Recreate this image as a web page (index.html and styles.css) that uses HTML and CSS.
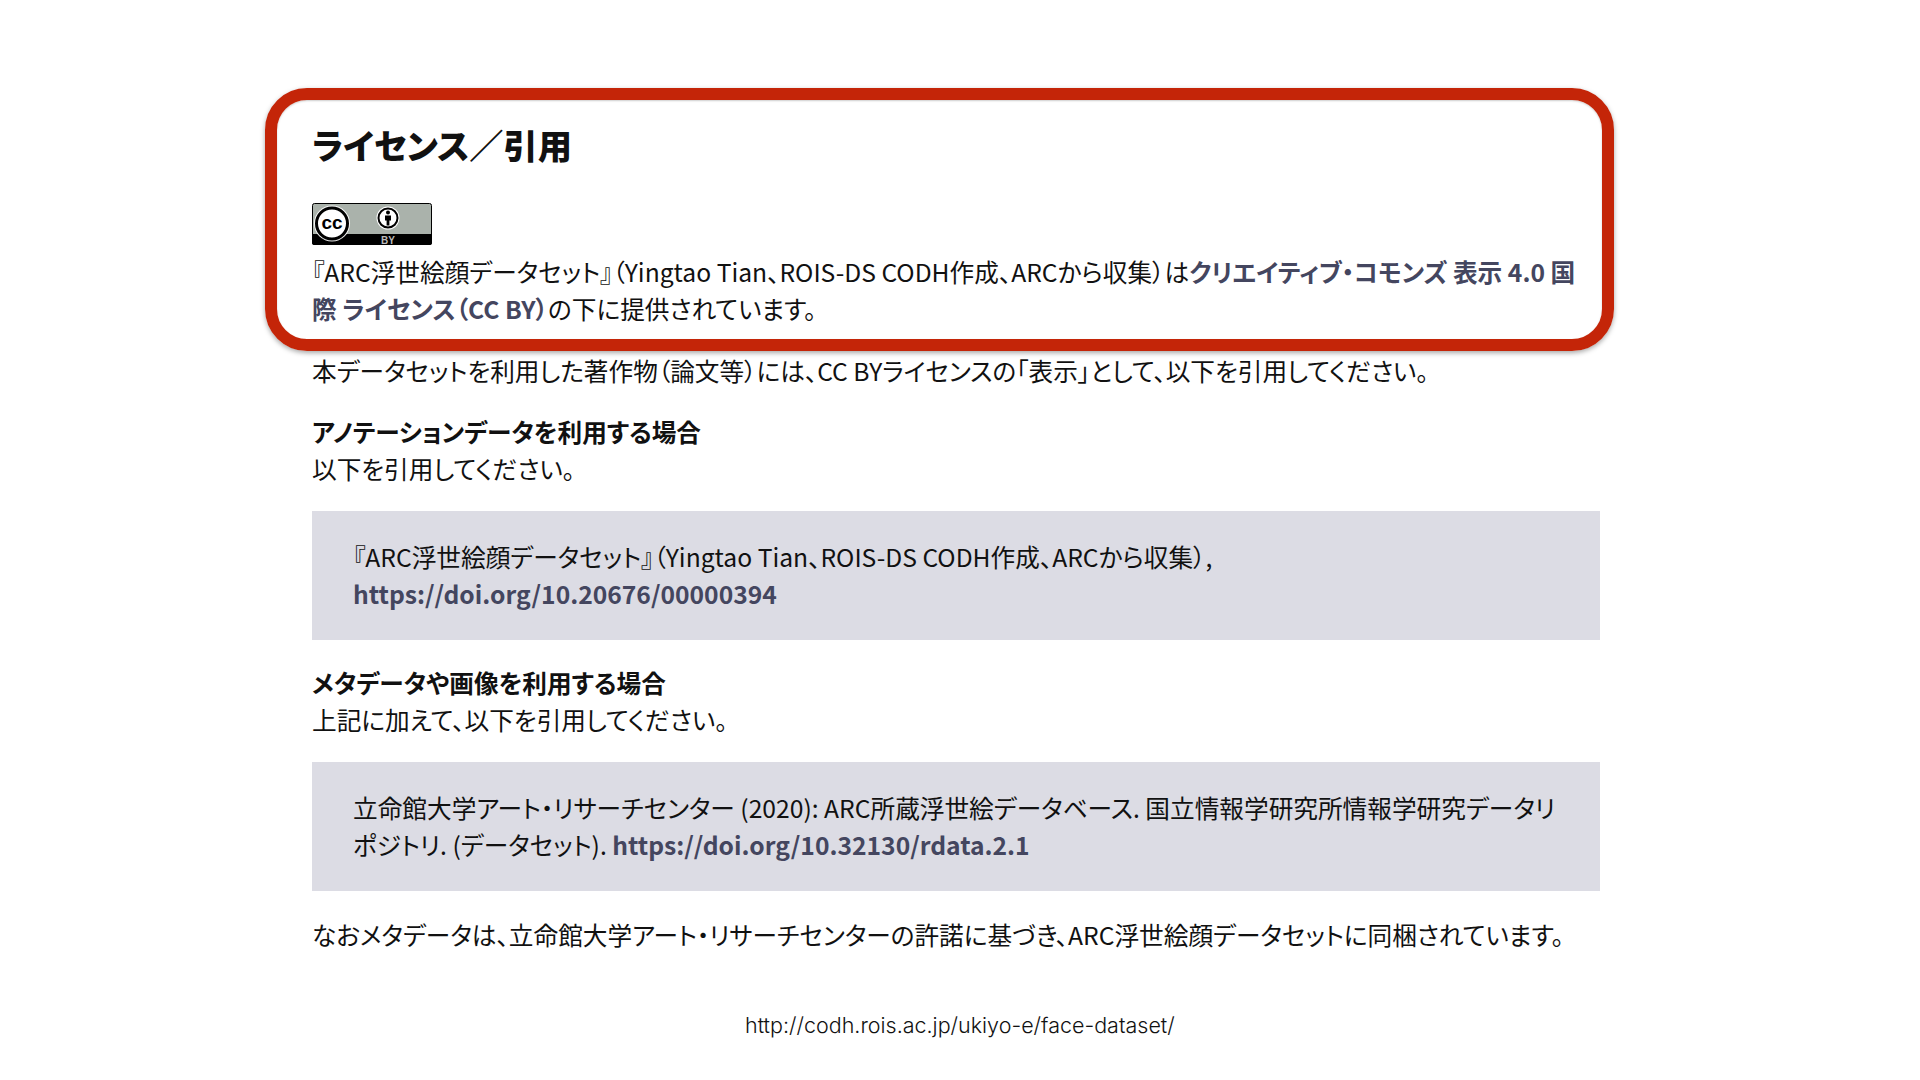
FILE: index.html
```html
<!DOCTYPE html>
<html lang="ja">
<head>
<meta charset="utf-8">
<title>ライセンス／引用</title>
<link rel="stylesheet" href="styles.css">
</head>
<body>
<div class="highlight"></div>
<main class="content">
  <h2 class="title">ライセンス／引用</h2>
  <svg class="badge" viewBox="0 0 120 42" width="120" height="42" role="img" aria-label="CC BY">
    <rect x="0.5" y="0.5" width="119" height="41" rx="2" fill="#aab2ab" stroke="#000"/>
    <path d="M0 31H120V40a2 2 0 0 1-2 2H2a2 2 0 0 1-2-2Z" fill="#000"/>
    <circle cx="20" cy="20.5" r="18" fill="#fff" opacity="0.9"/>
    <circle cx="20" cy="20.5" r="15.5" fill="#fff" stroke="#000" stroke-width="3"/>
    <text class="badge-cc" x="20" y="26" text-anchor="middle">cc</text>
    <circle cx="76" cy="15" r="11.5" fill="#fff"/>
    <circle cx="76" cy="15" r="9.5" fill="#fff" stroke="#000" stroke-width="2"/>
    <circle cx="76" cy="9.5" r="2" fill="#000"/>
    <path d="M73 12.5h6v5h-1.6v5h-2.8v-5H73Z" fill="#000"/>
    <text class="badge-by" x="76" y="40.5" text-anchor="middle">BY</text>
  </svg>
  <p class="para">『ARC浮世絵顔データセット』（Yingtao Tian、ROIS-DS CODH作成、ARCから収集）は<a class="link">クリエイティブ・コモンズ 表示 4.0 国<br>際 ライセンス（CC BY）</a>の下に提供されています。</p>
  <p class="para gap-notice">本データセットを利用した著作物（論文等）には、CC BYライセンスの「表示」として、以下を引用してください。</p>
  <p class="para gap-section"><strong>アノテーションデータを利用する場合</strong><br>以下を引用してください。</p>
  <blockquote class="cite">『ARC浮世絵顔データセット』（Yingtao Tian、ROIS-DS CODH作成、ARCから収集）,<br><a class="link">https://doi.org/10.20676/00000394</a></blockquote>
  <p class="para gap-section2"><strong>メタデータや画像を利用する場合</strong><br>上記に加えて、以下を引用してください。</p>
  <blockquote class="cite">立命館大学アート・リサーチセンター (2020): ARC所蔵浮世絵データベース. 国立情報学研究所情報学研究データリ<br>ポジトリ. (データセット). <a class="link">https://doi.org/10.32130/rdata.2.1</a></blockquote>
  <p class="para gap-end">なおメタデータは、立命館大学アート・リサーチセンターの許諾に基づき、ARC浮世絵顔データセットに同梱されています。</p>
  <div class="source">http://codh.rois.ac.jp/ukiyo-e/face-dataset/</div>
</main>
</body>
</html>
```
FILE: styles.css
```css
* { box-sizing: border-box; }
html, body { margin: 0; padding: 0; background: #fff; }
body {
  width: 1920px;
  height: 1080px;
  overflow: hidden;
  position: relative;
  font-family: "Noto Sans CJK JP", "Noto Sans", sans-serif;
  color: #111;
  font-feature-settings: "palt";
}
.highlight {
  position: absolute;
  left: 265px;
  top: 88px;
  width: 1349px;
  height: 263px;
  border: 12px solid #c42508;
  border-radius: 42px;
  box-shadow: 0 2px 5px rgba(0,0,0,.35), inset 0 1px 2px rgba(0,0,0,.2);
}
.content {
  width: 1288px;
  margin-left: 312px;
  padding-top: 119px;
  display: flow-root;
}
.title {
  margin: 0;
  font-size: 34.2px;
  line-height: 50px;
  font-weight: 900;
  color: #111;
}
.badge { display: block; margin-top: 34px; }
.badge-cc { font: 700 19px "Liberation Sans", sans-serif; }
.badge-by { font: 700 10px "Liberation Sans", sans-serif; fill: #bbb; }
.para {
  margin: 8px 0 0;
  font-size: 24.66px;
  line-height: 37px;
}
.para strong { font-weight: 700; }
.gap-notice { margin-top: 25px; }
.gap-section { margin-top: 24px; }
.gap-section2 { margin-top: 24px; }
.gap-end { margin-top: 25px; }
.link { color: #44465f; font-weight: 700; }
.cite {
  margin: 24px 0 0;
  height: 129px;
  padding: 27px 20px 27px 41px;
  background: #dcdce4;
  font-size: 24.66px;
  line-height: 37px;
}
.source {
  margin-top: 57px;
  margin-left: 433px;
  font: 300 21.5px/30px "Inter", sans-serif;
  color: #111;
}
```
